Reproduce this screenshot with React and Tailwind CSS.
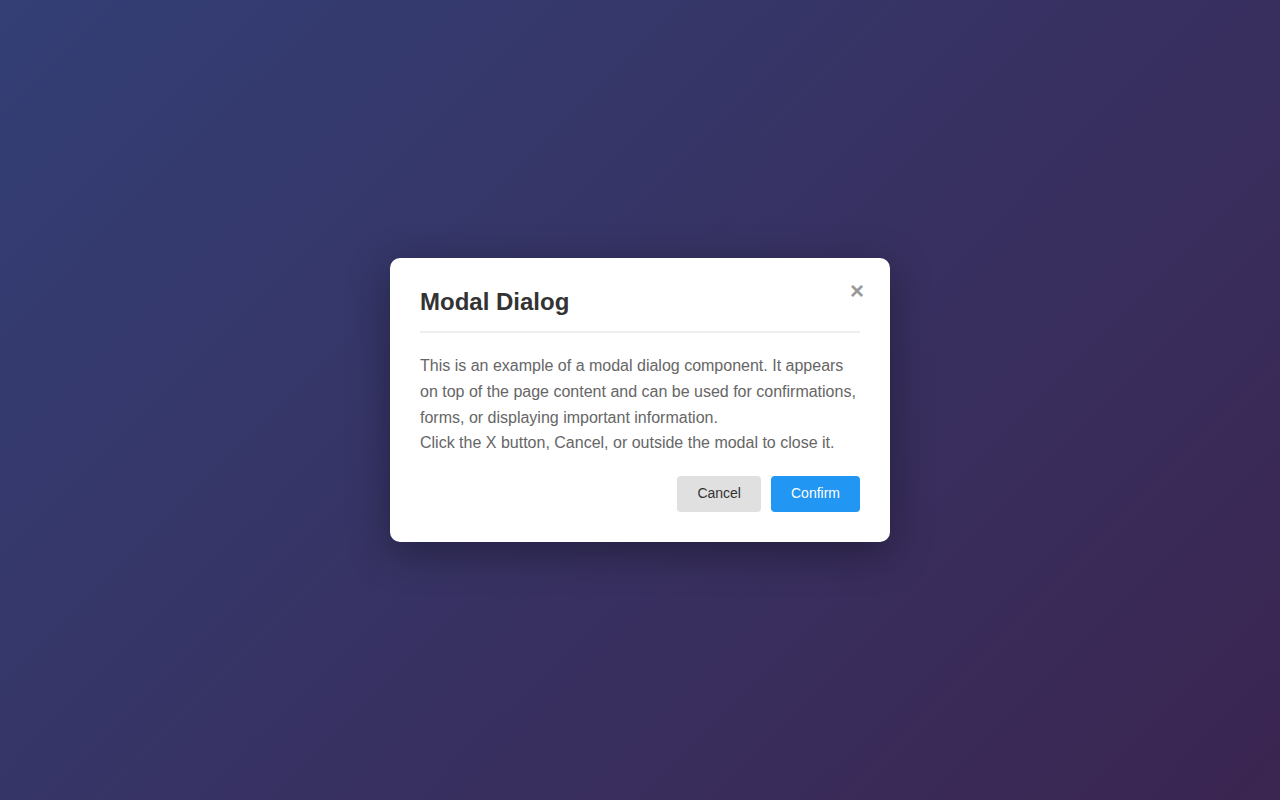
export default function App() {
  return (
    <div
      className="w-full h-[800px] flex items-center justify-center bg-[linear-gradient(135deg,#333f75_0%,#3b2551_100%)]"
      style={{ fontFamily: '"Liberation Sans", Arial, sans-serif' }}
    >
      <div className="relative w-[500px] bg-white rounded-[10px] p-[30px] shadow-[0_10px_40px_rgba(0,0,0,0.35)]">
        <button className="absolute top-[21px] right-[26px] text-[24px] leading-none font-bold text-[#999]">
          ×
        </button>
        <div className="pb-[15px] border-b-2 border-[#eee] mb-[20px]">
          <h2 className="text-[24px] leading-[28px] font-bold text-[#333]">Modal Dialog</h2>
        </div>
        <p className="text-[16px] leading-[1.6] text-[#666]">
          This is an example of a modal dialog component. It appears on top of the page content and
          can be used for confirmations, forms, or displaying important information.
          <br />
          Click the X button, Cancel, or outside the modal to close it.
        </p>
        <div className="flex justify-end gap-[10px] mt-[20px]">
          <button className="h-[36px] px-[20px] rounded-[4px] bg-[#e0e0e0] text-[#333] text-[14px]">
            Cancel
          </button>
          <button className="h-[36px] px-[20px] rounded-[4px] bg-[#2196f3] text-white text-[14px]">
            Confirm
          </button>
        </div>
      </div>
    </div>
  );
}
